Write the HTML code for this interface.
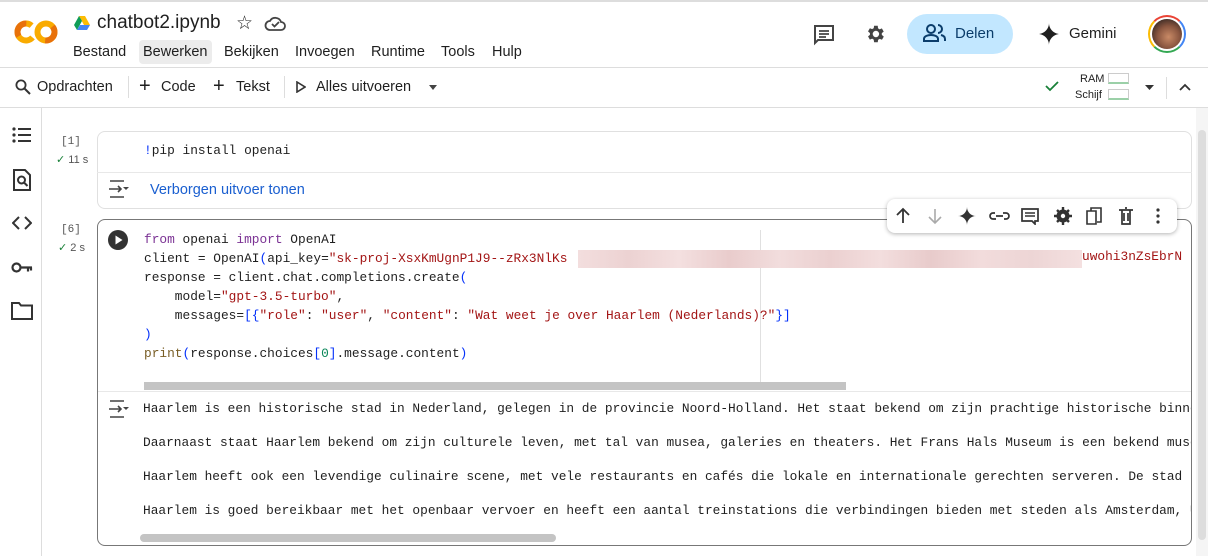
<!DOCTYPE html>
<html><head><meta charset="utf-8"><style>
*{box-sizing:border-box;margin:0;padding:0}
body{width:1208px;height:556px;overflow:hidden;background:#fff;font-family:"Liberation Sans",sans-serif;color:#1f1f1f;position:relative}
.a{position:absolute}
.mono{font-family:"Liberation Mono",monospace;font-size:12.83px;white-space:pre}
.kw{color:#7b3294}.st{color:#a31515}.br{color:#0431fa}
svg{display:block}
</style></head><body>
<div class="a" style="left:0;top:0;width:1208px;height:2px;background:#ddd"></div>
<svg class="a" style="left:14px;top:18px" width="44" height="28" viewBox="0 0 44 28">
<circle cx="12" cy="14" r="8.5" fill="none" stroke="#f9ab00" stroke-width="6" stroke-dasharray="40 14" transform="rotate(40 12 14)"/>
<circle cx="12" cy="14" r="8.5" fill="none" stroke="#e8710a" stroke-width="6" stroke-dasharray="18 36" transform="rotate(150 12 14)"/>
<circle cx="32" cy="14" r="8.5" fill="none" stroke="#f9ab00" stroke-width="6"/>
<circle cx="32" cy="14" r="8.5" fill="none" stroke="#e8710a" stroke-width="6" stroke-dasharray="20 34" transform="rotate(-40 32 14)"/>
</svg>
<svg class="a" style="left:74px;top:16px" width="16" height="14" viewBox="0 0 16 14"><path d="M5 0h6l5 9h-6z" fill="#fbbc04"/><path d="M5 0L0 9l3 5 5-9z" fill="#0f9d58"/><path d="M3 14h10l3-5H6z" fill="#4285f4"/></svg>
<div class="a" style="left:97px;top:12px;font-size:19px">chatbot2.ipynb</div>
<div class="a" style="left:236px;top:12px;font-size:19px">☆</div>
<svg class="a" style="left:264px;top:15px" width="22" height="16" viewBox="0 0 22 16"><path d="M6 15h11a4 4 0 0 0 0-8 6 6 0 0 0-11-1 4.5 4.5 0 0 0 0 9z" fill="none" stroke="#444" stroke-width="1.8"/><path d="M8 9l2.5 2.5 4.5-4.5" fill="none" stroke="#444" stroke-width="1.8"/></svg>
<div class="a" style="left:139px;top:40px;width:73px;height:24px;background:#ececec;border-radius:4px"></div>
<div class="a" style="left:73px;top:44px;font-size:14.5px">
<span style="position:absolute;left:0">Bestand</span><span style="position:absolute;left:70px">Bewerken</span><span style="position:absolute;left:151px">Bekijken</span><span style="position:absolute;left:222px">Invoegen</span><span style="position:absolute;left:298px">Runtime</span><span style="position:absolute;left:368px">Tools</span><span style="position:absolute;left:419px">Hulp</span></div>
<svg class="a" style="left:813px;top:24px" width="22" height="22" viewBox="0 0 22 22"><path d="M2 2h18v14H5l-3 3z" fill="none" stroke="#444" stroke-width="2"/><path d="M6 7h10M6 10h10M6 13h7" stroke="#444" stroke-width="1.8"/></svg>
<svg class="a" style="left:864px;top:23px" width="22" height="22" viewBox="0 0 24 24"><path fill="#444" d="M19.4 13a7.5 7.5 0 0 0 0-2l2.1-1.6-2-3.5-2.5 1a7 7 0 0 0-1.7-1L15 3h-4l-.4 2.7a7 7 0 0 0-1.7 1l-2.5-1-2 3.5L6.5 11a7.5 7.5 0 0 0 0 2l-2.1 1.6 2 3.5 2.5-1a7 7 0 0 0 1.7 1L11 21h4l.4-2.7a7 7 0 0 0 1.7-1l2.5 1 2-3.5zM13 15.5a3.5 3.5 0 1 1 0-7 3.5 3.5 0 0 1 0 7z"/></svg>
<div class="a" style="left:907px;top:14px;width:106px;height:40px;background:#c2e7ff;border-radius:20px"></div>
<svg class="a" style="left:923px;top:23px" width="24" height="20" viewBox="0 0 24 20"><circle cx="8" cy="6" r="4" fill="none" stroke="#0b3d6b" stroke-width="2"/><path d="M1 18v-2c0-3 4-4 7-4s7 1 7 4v2z" fill="none" stroke="#0b3d6b" stroke-width="2"/><path d="M15 2a4 4 0 0 1 0 8M18 12c2 .5 4 1.5 4 4v2" fill="none" stroke="#0b3d6b" stroke-width="2"/></svg>
<div class="a" style="left:955px;top:25px;font-size:15px;color:#0b3d6b">Delen</div>
<svg class="a" style="left:1038px;top:23px" width="22" height="22" viewBox="0 0 22 22"><path d="M11 0C11 6 16 11 22 11 16 11 11 16 11 22 11 16 6 11 0 11 6 11 11 6 11 0z" fill="#1f1f1f"/></svg>
<div class="a" style="left:1069px;top:25px;font-size:15px">Gemini</div>
<div class="a" style="left:1148px;top:15px;width:38px;height:38px;border-radius:50%;border:2.5px solid;border-color:#ea4335 #4285f4 #34a853 #fbbc04;padding:2px"><div style="width:100%;height:100%;border-radius:50%;background:radial-gradient(circle at 55% 60%,#c98a66 0,#8a5640 45%,#3a2a25 80%)"></div></div>
<div class="a" style="left:0;top:67px;width:1208px;height:1px;background:#ddd"></div>
<svg class="a" style="left:15px;top:79px" width="16" height="16" viewBox="0 0 16 16"><circle cx="6" cy="6" r="4.6" fill="none" stroke="#333" stroke-width="1.8"/><path d="M9.5 9.5L15 15" stroke="#333" stroke-width="2"/></svg>
<div class="a" style="left:37px;top:79px;font-size:14.5px">Opdrachten</div>
<div class="a" style="left:128px;top:76px;width:1px;height:22px;background:#ddd"></div>
<div class="a" style="left:139px;top:75px;font-size:20px;font-weight:300">+</div>
<div class="a" style="left:161px;top:79px;font-size:14.5px">Code</div>
<div class="a" style="left:213px;top:75px;font-size:20px;font-weight:300">+</div>
<div class="a" style="left:236px;top:79px;font-size:14.5px">Tekst</div>
<div class="a" style="left:284px;top:76px;width:1px;height:22px;background:#ddd"></div>
<svg class="a" style="left:296px;top:81px" width="10" height="12" viewBox="0 0 10 12"><path d="M1 1l8 5-8 5z" fill="none" stroke="#333" stroke-width="1.6"/></svg>
<div class="a" style="left:316px;top:79px;font-size:14.5px">Alles uitvoeren</div>
<svg class="a" style="left:429px;top:85px" width="8" height="5"><path d="M0 0h8L4 5z" fill="#444"/></svg>
<svg class="a" style="left:1045px;top:81px" width="14" height="11"><path d="M1 5l4 4 8-8" fill="none" stroke="#188038" stroke-width="1.8"/></svg>
<div class="a" style="left:1080px;top:73px;font-size:11px">RAM</div>
<div class="a" style="left:1075px;top:89px;font-size:11px">Schijf</div>
<div class="a" style="left:1108px;top:73px;width:21px;height:11px;border:1px solid #ccc;border-bottom:2px solid #9bd0a8"></div>
<div class="a" style="left:1108px;top:89px;width:21px;height:11px;border:1px solid #ccc;border-bottom:2px solid #9bd0a8"></div>
<svg class="a" style="left:1145px;top:85px" width="9" height="5"><path d="M0 0h9L4.5 5z" fill="#333"/></svg>
<div class="a" style="left:1166px;top:77px;width:1px;height:22px;background:#ddd"></div>
<svg class="a" style="left:1179px;top:83px" width="12" height="8"><path d="M1 7l5-5 5 5" fill="none" stroke="#333" stroke-width="1.8"/></svg>
<div class="a" style="left:0;top:107px;width:1208px;height:1px;background:#ddd"></div>
<div class="a" style="left:41px;top:108px;width:1px;height:448px;background:#ddd"></div>
<svg class="a" style="left:12px;top:126px" width="20" height="18" viewBox="0 0 20 18"><g fill="#333"><circle cx="2" cy="3" r="1.6"/><circle cx="2" cy="9" r="1.6"/><circle cx="2" cy="15" r="1.6"/><rect x="6" y="2" width="13" height="2"/><rect x="6" y="8" width="13" height="2"/><rect x="6" y="14" width="13" height="2"/></g></svg>
<svg class="a" style="left:13px;top:169px" width="18" height="22" viewBox="0 0 18 22"><path d="M1 1h11l5 5v15H1z" fill="none" stroke="#333" stroke-width="2"/><circle cx="8.5" cy="11" r="3.5" fill="none" stroke="#333" stroke-width="2"/><path d="M11 13.5l3.5 3.5" stroke="#333" stroke-width="2"/></svg>
<svg class="a" style="left:12px;top:216px" width="20" height="14" viewBox="0 0 20 14"><path d="M7 1L1 7l6 6M13 1l6 6-6 6" fill="none" stroke="#333" stroke-width="2"/></svg>
<svg class="a" style="left:11px;top:261px" width="22" height="13" viewBox="0 0 22 13"><circle cx="5.5" cy="6.5" r="4" fill="none" stroke="#333" stroke-width="2.2"/><path d="M9.5 6.5H21M17 6.5v4M20 6.5v3" stroke="#333" stroke-width="2.2"/></svg>
<svg class="a" style="left:11px;top:302px" width="22" height="18" viewBox="0 0 22 18"><path d="M1 1h7l2 2.5h11V17H1z" fill="none" stroke="#333" stroke-width="2"/></svg>
<div class="a mono" style="left:61px;top:136px;font-size:11px;color:#555">[1]</div>
<div class="a" style="left:56px;top:153px;font-size:11px;color:#555"><span style="color:#188038">✓</span> 11 s</div>
<div class="a" style="left:97px;top:131px;width:1095px;height:78px;border:1px solid #e0e0e0;border-radius:8px"></div>
<div class="a" style="left:97px;top:172px;width:1095px;height:1px;background:#e8e8e8"></div>
<div class="a mono" style="left:144px;top:143px"><span style="color:#0431fa">!</span>pip install openai</div>
<svg class="a" style="left:108px;top:180px" width="22" height="18" viewBox="0 0 22 18"><path d="M2 1h14M2 17h14M1 9h12M10 6l3 3-3 3" fill="none" stroke="#444" stroke-width="1.6"/><path d="M15 7h6l-3 3z" fill="#444"/></svg>
<div class="a" style="left:150px;top:182px;font-size:14.5px;color:#1a5fd0">Verborgen uitvoer tonen</div>
<div class="a mono" style="left:61px;top:224px;font-size:11px;color:#555">[6]</div>
<div class="a" style="left:58px;top:241px;font-size:11px;color:#555"><span style="color:#188038">✓</span> 2 s</div>
<div class="a" style="left:97px;top:219px;width:1095px;height:327px;border:1px solid #777;border-radius:8px"></div>
<div class="a" style="left:98px;top:391px;width:1093px;height:1px;background:#e8e8e8"></div>
<svg class="a" style="left:108px;top:230px" width="20" height="20"><circle cx="10" cy="10" r="10" fill="#333"/><path d="M7.5 5.5l7 4.5-7 4.5z" fill="#fff"/></svg>
<div class="a" style="left:760px;top:230px;width:1px;height:160px;background:#e0e0e0"></div>
<div class="a mono" style="left:144px;top:230px;line-height:19px"><span class="kw">from</span> openai <span class="kw">import</span> OpenAI
client = OpenAI<span class="br">(</span>api_key=<span class="st">"sk-proj-XsxKmUgnP1J9--zRx3NlKs</span>
response = client.chat.completions.create<span class="br">(</span>
    model=<span class="st">"gpt-3.5-turbo"</span>,
    messages=<span class="br">[{</span><span class="st">"role"</span>: <span class="st">"user"</span>, <span class="st">"content"</span>: <span class="st">"Wat weet je over Haarlem (Nederlands)?"</span><span class="br">}]</span>
<span class="br">)</span>
<span style="color:#795e26">print</span><span class="br">(</span>response.choices<span class="br">[</span><span style="color:#098658">0</span><span class="br">]</span>.message.content<span class="br">)</span></div>
<div class="a" style="left:578px;top:250px;width:504px;height:18px;background:linear-gradient(90deg,#f3dede 0,#ecd2d2 10%,#f4e0e0 20%,#e9cccc 30%,#f2dddd 40%,#ebd0d0 50%,#f3dede 60%,#e8cbcb 70%,#f2dcdc 80%,#edd5d5 90%,#f4e0e0 100%)"></div>
<div class="a mono" style="left:1082px;top:249px;color:#a31515">uwohi3nZsEbrN</div>
<div class="a" style="left:144px;top:382px;width:702px;height:8px;background:#c4c4c4"></div>
<div class="a" style="left:887px;top:199px;width:290px;height:34px;background:#fff;border-radius:8px;box-shadow:0 1px 4px rgba(0,0,0,.3)"></div>
<svg class="a" style="left:895px;top:207px" width="280" height="18" viewBox="0 0 280 18">
<path d="M8 16V2M2 8l6-6 6 6" fill="none" stroke="#333" stroke-width="1.8"/>
<path d="M40 2v14M34 10l6 6 6-6" fill="none" stroke="#aaa" stroke-width="1.6"/>
<path d="M72 0c0 5 4 9 9 9-5 0-9 4-9 9 0-5-4-9-9-9 5 0 9-4 9-9z" fill="#333"/>
<path d="M100 6h-2a3 3 0 0 0 0 6h3M108 6h3a3 3 0 0 1 0 6h-2M101 9h7" fill="none" stroke="#333" stroke-width="1.7"/>
<path d="M127 2h16v12h-3l0 3-3-3h-10z" fill="none" stroke="#333" stroke-width="1.7"/><path d="M130 6h10M130 9h10" stroke="#333" stroke-width="1.5"/>
<circle cx="168" cy="9" r="6.5" fill="#333"/><path d="M168 0v18M159 9h18M162 3l12 12M174 3l-12 12" stroke="#333" stroke-width="2.4"/><circle cx="168" cy="9" r="2.2" fill="#fff"/>
<path d="M196 4V1h10v14h-4M192 4h9v13h-9z" fill="none" stroke="#333" stroke-width="1.6"/>
<path d="M224 3h14M227 3v14h8V3M230 1h2M229 6v8M233 6v8" fill="none" stroke="#333" stroke-width="1.7"/>
<circle cx="263" cy="3" r="1.6" fill="#333"/><circle cx="263" cy="9" r="1.6" fill="#333"/><circle cx="263" cy="15" r="1.6" fill="#333"/>
</svg>
<svg class="a" style="left:108px;top:400px" width="22" height="18" viewBox="0 0 22 18"><path d="M2 1h14M2 17h14M1 9h12M10 6l3 3-3 3" fill="none" stroke="#444" stroke-width="1.6"/><path d="M15 7h6l-3 3z" fill="#444"/></svg>
<div class="a mono" style="left:143px;top:392px;width:1048px;overflow:hidden;line-height:34px;color:#1f1f1f">Haarlem is een historische stad in Nederland, gelegen in de provincie Noord-Holland. Het staat bekend om zijn prachtige historische binnenstad
Daarnaast staat Haarlem bekend om zijn culturele leven, met tal van musea, galeries en theaters. Het Frans Hals Museum is een bekend museum
Haarlem heeft ook een levendige culinaire scene, met vele restaurants en cafés die lokale en internationale gerechten serveren. De stad heeft
Haarlem is goed bereikbaar met het openbaar vervoer en heeft een aantal treinstations die verbindingen bieden met steden als Amsterdam, Utrecht</div>
<div class="a" style="left:140px;top:534px;width:416px;height:8px;background:#c4c4c4;border-radius:4px"></div>
<div class="a" style="left:1196px;top:108px;width:12px;height:448px;background:#f5f5f5"></div>
<div class="a" style="left:1198px;top:130px;width:8px;height:410px;background:#ddd;border-radius:4px"></div>
</body></html>
